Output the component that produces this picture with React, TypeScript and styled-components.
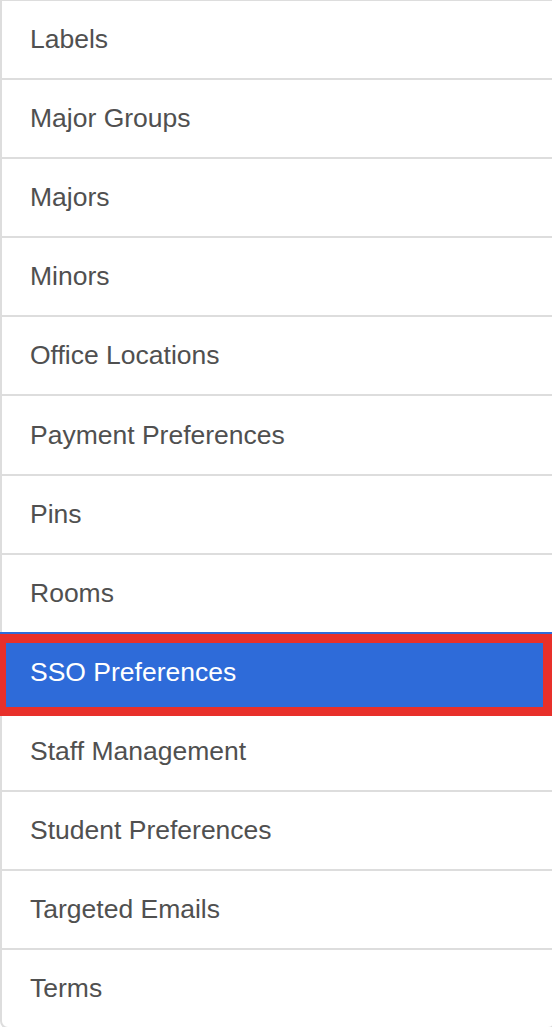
import React from "react";
import styled, { createGlobalStyle } from "styled-components";

const items = [
  "Labels",
  "Major Groups",
  "Majors",
  "Minors",
  "Office Locations",
  "Payment Preferences",
  "Pins",
  "Rooms",
  "SSO Preferences",
  "Staff Management",
  "Student Preferences",
  "Targeted Emails",
  "Terms",
];

const ACTIVE = "SSO Preferences";

const GlobalStyle = createGlobalStyle`
  html, body {
    margin: 0;
    padding: 0;
    background: #fff;
    overflow: hidden;
  }
  body {
    font-family: "Liberation Sans", Arial, Helvetica, sans-serif;
  }
`;

const List = styled("div")`
  display: flex;
  flex-direction: column;
  width: 556px;
  margin-top: -1px;
`;

const Item = styled("a")<{ $active?: boolean; $last?: boolean }>`
  position: relative;
  display: flex;
  align-items: center;
  height: 77.1px;
  padding: 0 20px 0 28px;
  margin-bottom: -2px;
  border: 2px solid ${({ $active }) => ($active ? "#2e6bd9" : "#dddddd")};
  border-radius: ${({ $last }) => ($last ? "0 0 8px 8px" : "0")};
  background: ${({ $active }) => ($active ? "#2e6bd9" : "#ffffff")};
  color: ${({ $active }) => ($active ? "#ffffff" : "#505050")};
  font-size: 26.5px;
  text-decoration: none;
  z-index: ${({ $active }) => ($active ? 2 : 1)};
  cursor: pointer;

  ${({ $active }) =>
    $active &&
    `
    &::after {
      content: "";
      position: absolute;
      top: 0;
      bottom: -5px;
      left: -5px;
      right: 2px;
      border: 9px solid #e8302a;
      pointer-events: none;
    }
  `}
`;

export default function App() {
  return (
    <>
      <GlobalStyle />
      <List>
        {items.map((name, i) => (
          <Item key={name} $active={name === ACTIVE} $last={i === items.length - 1}>
            {name}
          </Item>
        ))}
      </List>
    </>
  );
}
